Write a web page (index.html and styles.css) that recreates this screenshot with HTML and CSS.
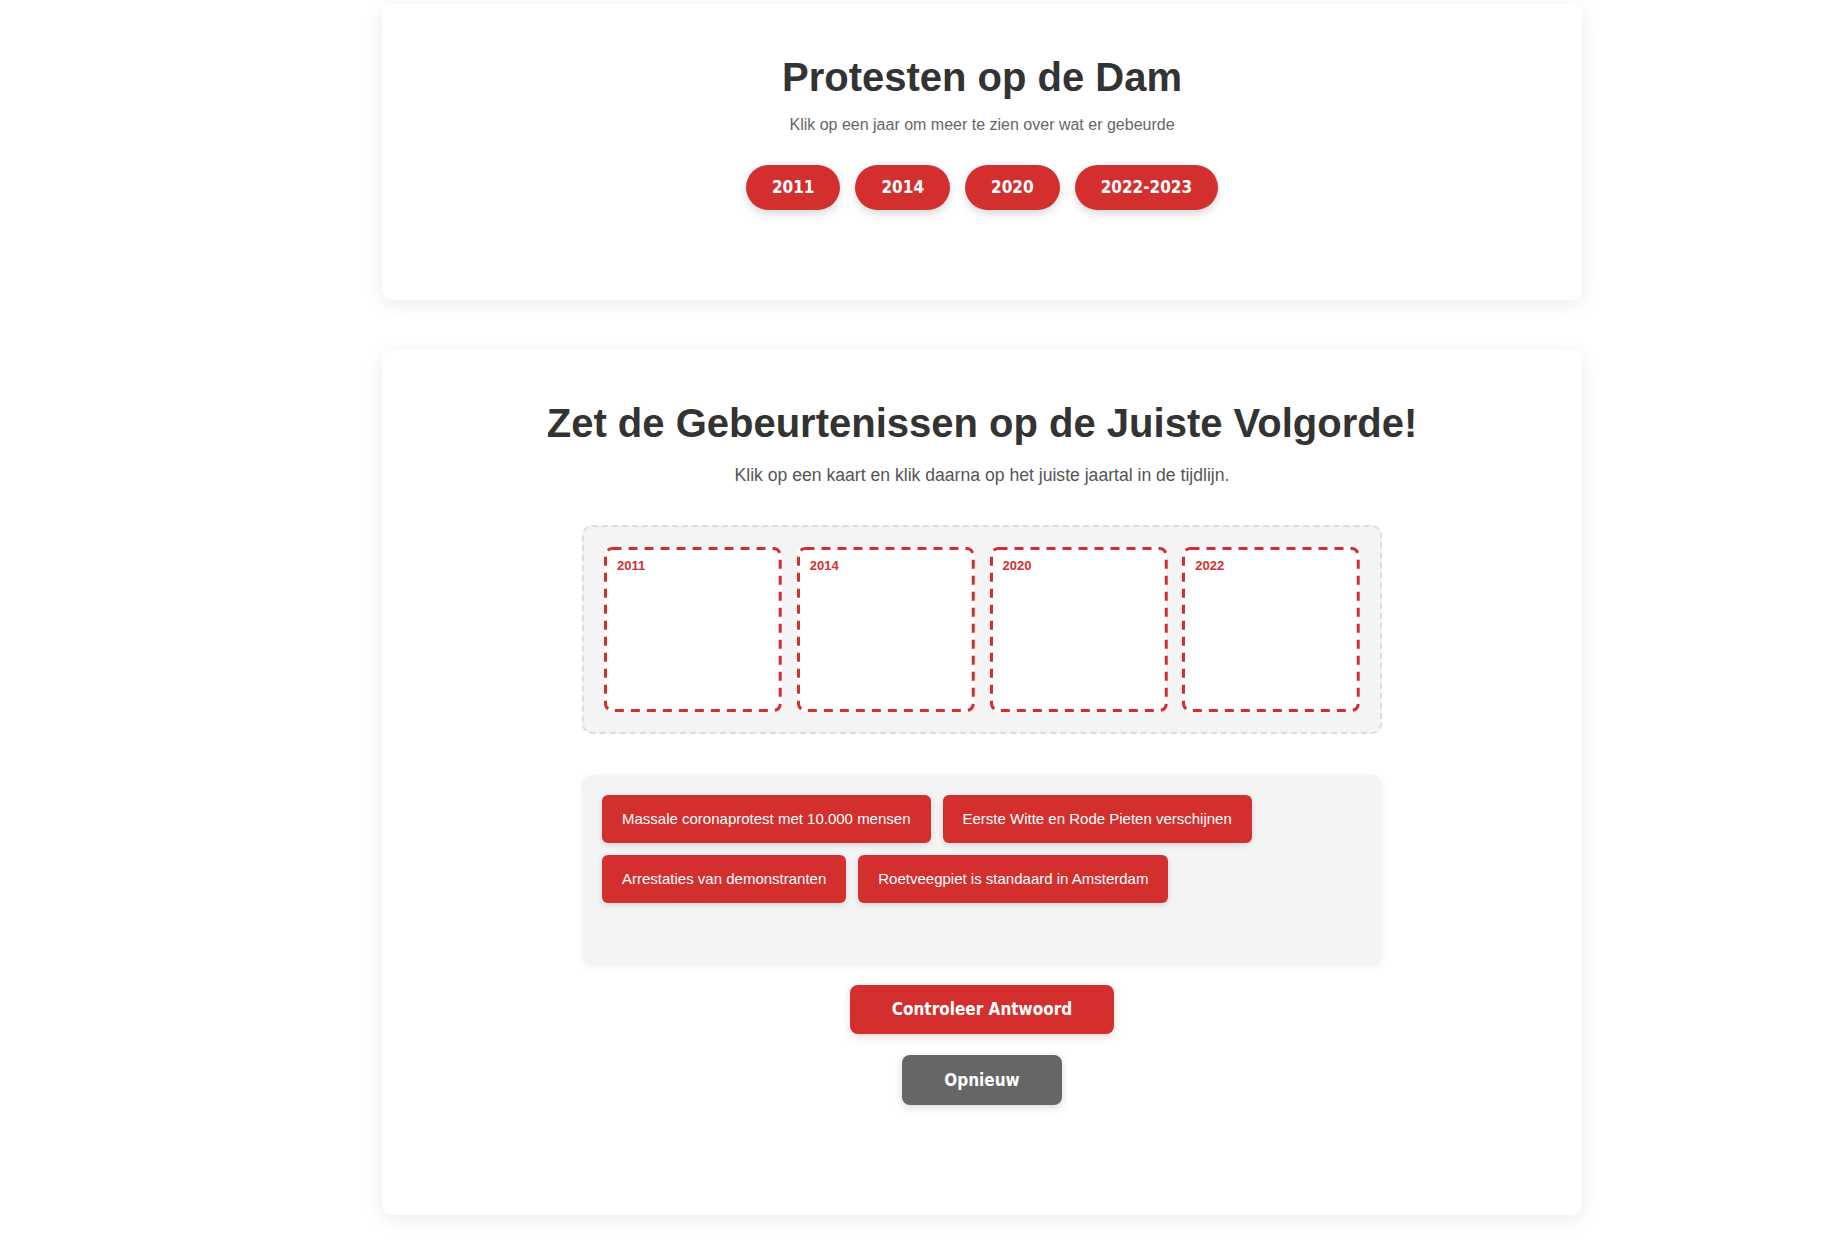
FILE: index.html
```html
<!DOCTYPE html>
<html>
    <head>
        <meta charset="utf-8">
        <title>Protesten op de Dam</title>
        <link rel="stylesheet" href="styles.css">
    </head>
    <body>
        <div class="page">

            <div class="card intro">
                <h1 class="title">Protesten op de Dam</h1>
                <p class="lead">Klik op een jaar om meer te zien over wat er gebeurde</p>
                <div class="years">
                    <button class="yearBtn">2011</button>
                    <button class="yearBtn">2014</button>
                    <button class="yearBtn">2020</button>
                    <button class="yearBtn">2022-2023</button>
                </div>
            </div>

            <div class="card game">
                <h2 class="title">Zet de Gebeurtenissen op de Juiste Volgorde!</h2>
                <p class="lead lead-big">Klik op een kaart en klik daarna op het juiste jaartal in de tijdlijn.</p>

                <div class="timeline">
                    <div class="slot">
                        <svg class="slotBorder"><rect></rect></svg>
                        <span class="slotYear">2011</span>
                    </div>
                    <div class="slot">
                        <svg class="slotBorder"><rect></rect></svg>
                        <span class="slotYear">2014</span>
                    </div>
                    <div class="slot">
                        <svg class="slotBorder"><rect></rect></svg>
                        <span class="slotYear">2020</span>
                    </div>
                    <div class="slot">
                        <svg class="slotBorder"><rect></rect></svg>
                        <span class="slotYear">2022</span>
                    </div>
                </div>

                <div class="pool">
                    <div class="event">Massale coronaprotest met 10.000 mensen</div>
                    <div class="event">Eerste Witte en Rode Pieten verschijnen</div>
                    <div class="event">Arrestaties van demonstranten</div>
                    <div class="event">Roetveegpiet is standaard in Amsterdam</div>
                </div>

                <button class="actionBtn check">Controleer Antwoord</button>
                <button class="actionBtn reset">Opnieuw</button>
            </div>

        </div>
    </body>
</html>
```

FILE: styles.css
```css
body{
    margin: 0;
    background: #ffffff;
    font-family: "Liberation Sans", Arial, sans-serif;
    color: #333;
}
.page{
    padding: 4px 0 40px 382px;
}

.card{
    width: 1200px;
    box-sizing: border-box;
    background: white;
    border-radius: 10px;
    box-shadow: 0px 4px 20px 0px rgba(0, 0, 0, 0.08);
    text-align: center;
    padding: 51px 40px 0 40px;
}
.intro{
    height: 296px;
}
.game{
    margin-top: 50px;
    height: 865px;
}

.title{
    margin: 0;
    font-size: 40px;
    line-height: 45px;
    font-weight: bold;
    color: #333;
}
.lead{
    margin: 16px 0 0 0;
    font-size: 16px;
    line-height: 18px;
    color: #666;
}
.lead-big{
    margin-top: 19px;
    font-size: 17.6px;
    line-height: 20px;
    color: #555;
}

.years{
    margin-top: 31px;
    display: flex;
    justify-content: center;
    gap: 15px;
}
.yearBtn{
    background: #d32f2f;
    color: white;
    border: none;
    border-radius: 25px;
    padding: 12px 26px;
    font-family: "DejaVu Sans Condensed", "DejaVu Sans", sans-serif;
    font-weight: bold;
    font-size: 17px;
    line-height: 21px;
    box-shadow: 0px 4px 8px 0px rgba(0, 0, 0, 0.15);
    cursor: pointer;
}

.timeline{
    width: 800px;
    box-sizing: border-box;
    margin: 40px auto 0 auto;
    padding: 20px;
    background: #f4f4f4;
    border: 2px dashed #ddd;
    border-radius: 10px;
    display: grid;
    grid-template-columns: repeat(4, 1fr);
    gap: 15px;
}
.slot{
    position: relative;
    height: 165px;
    box-sizing: border-box;
    background: white;
    border-radius: 8px;
    padding: 9px 13px;
    text-align: left;
}
.slotBorder{
    position: absolute;
    top: 0;
    left: 0;
    width: 100%;
    height: 100%;
    overflow: visible;
}
.slotBorder rect{
    x: 1.5px;
    y: 1.5px;
    width: calc(100% - 3px);
    height: calc(100% - 3px);
    rx: 7px;
    fill: none;
    stroke: #d32f2f;
    stroke-width: 3px;
    stroke-dasharray: 9 7;
}
.slotYear{
    position: relative;
    font-size: 13px;
    line-height: 15px;
    font-weight: bold;
    color: #d32f2f;
}

.pool{
    width: 800px;
    box-sizing: border-box;
    min-height: 190px;
    margin: 41px auto 0 auto;
    padding: 20px;
    background: #f4f4f4;
    border-radius: 10px;
    box-shadow: 0px 2px 8px 0px rgba(0, 0, 0, 0.06);
    display: flex;
    flex-wrap: wrap;
    align-content: flex-start;
    gap: 12px;
}
.event{
    background: #d32f2f;
    color: white;
    font-size: 15px;
    line-height: 18px;
    padding: 15px 20px;
    border-radius: 6px;
    box-shadow: 0px 2px 6px 0px rgba(0, 0, 0, 0.12);
    cursor: pointer;
}

.actionBtn{
    display: block;
    margin: 20px auto 0 auto;
    border: none;
    border-radius: 8px;
    color: white;
    padding: 14px 42px;
    font-family: "DejaVu Sans Condensed", "DejaVu Sans", sans-serif;
    font-weight: bold;
    font-size: 17px;
    line-height: 21px;
    cursor: pointer;
}
.check{
    background: #d32f2f;
    box-shadow: 0px 3px 8px 0px rgba(211, 47, 47, 0.2);
}
.reset{
    margin-top: 21px;
    background: #666;
    box-shadow: 0px 3px 8px 0px rgba(0, 0, 0, 0.15);
    line-height: 22px;
}
```
